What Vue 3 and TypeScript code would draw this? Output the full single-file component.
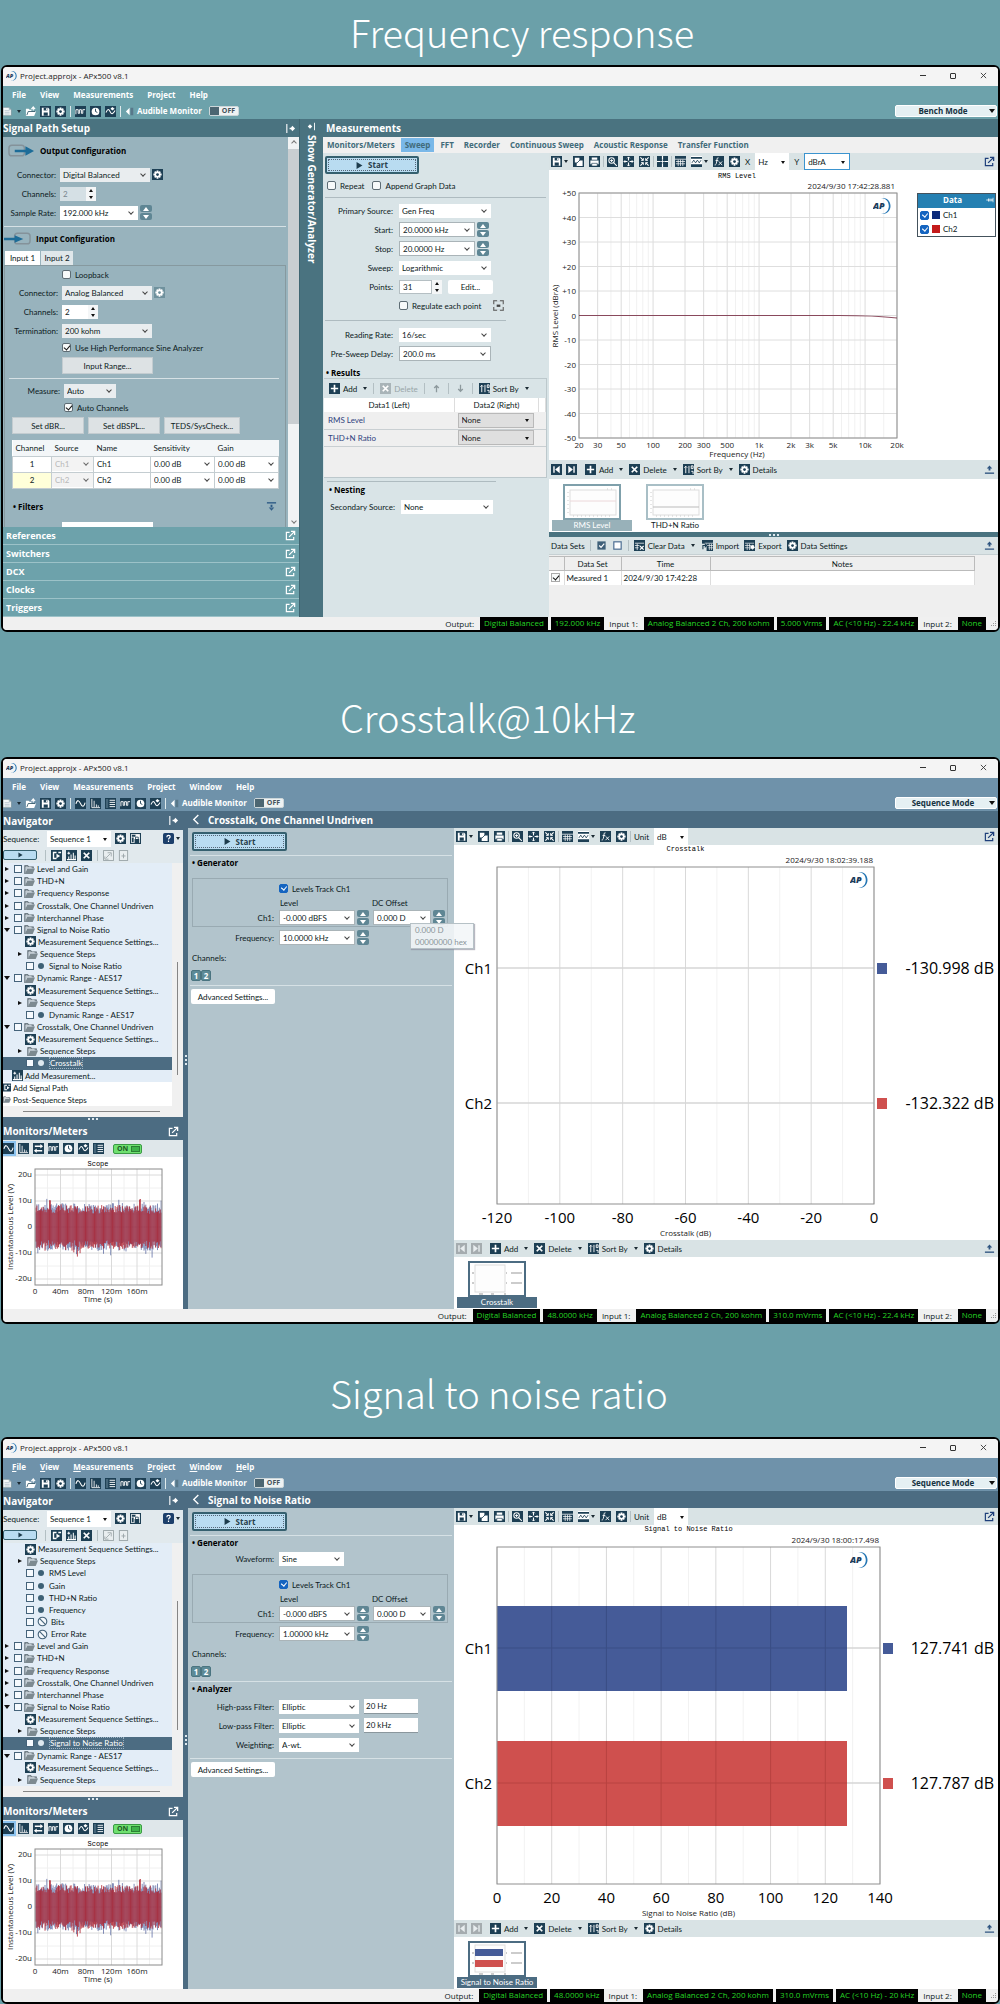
<script setup lang="ts">
import { h } from 'vue'

type Attrs = Record<string, unknown>

const DARK = '#1d3f54'
const sq = (body: string, fill = DARK) => `<rect width="12" height="12" fill="${fill}"/>${body}`
const gear =
  '<g fill="#fff"><path d="M5 1.5h2v9H5zM1.5 5h9v2h-9z"/><path d="M2.3 3.5 3.5 2.3l6.2 6.2-1.2 1.2zM8.5 2.3l1.2 1.2-6.2 6.2-1.2-1.2z"/><circle cx="6" cy="6" r="3.3"/></g>'
const line = (d: string, w = 1.2, c = '#fff') => `<path d="${d}" fill="none" stroke="${c}" stroke-width="${w}"/>`

const glyphs: Record<string, string> = {
  page: '<path d="M0 1h7l3 3v7H0z" fill="#f4f8f9" stroke="#6d8790" stroke-width=".8"/><path d="M7 1v3h3" fill="#9fb4bb"/><path d="M2 5h6M2 7h6M2 9h6" stroke="#9ab" stroke-width=".7"/>',
  open: '<path d="M1 11V3h3l1 1h2v2h5l-2 5z" fill="#fff"/><path d="M2 10l1.500-4H11" fill="none" stroke="#2d5364" stroke-width=".9"/><path d="M7 3.500 9 1l2 2.500M9 1v4" stroke="#fff" fill="none" stroke-width="1.200"/>',
  save: sq('<path d="M2 2h7l1.200 1.200V10.500H2z" fill="#fff"/><path d="M4 2h4v3H4zM4 7h4.500v3.500H4z" fill="#1d3f54"/><path d="M6.500 2.500h1v2h-1z" fill="#fff"/>'),
  gear: sq(gear + '<circle cx="6" cy="6" r="1.500" fill="#1d3f54"/>'),
  gearDim: sq(gear + '<circle cx="6" cy="6" r="1.500" fill="#6f919d"/>', '#6f919d'),
  bits: sq(line('M1 9V4h2.500v4H5V4h2v4h1.500V4H11', 1)),
  clock: sq('<circle cx="6" cy="6" r="4.200" fill="#fff"/>' + line('M6 3v3l2 1', 1, DARK)),
  sweep: sq(line('M1 7c2-4 3-4 4.500-1s2.500 4 5.500-1', 1.1) + '<path d="M8 1l2.500 2L8 5 6 3z" fill="#fff"/>'),
  sine: sq(line('M1 6.500C2.500 1 4.500 2.500 6 6s3.500 5 5-1', 1.1)),
  fft: sq(line('M2 1v9.500h9M4.500 10V3M7 10V7M9 10V8', 0.9)),
  list: sq('<path d="M1 1h2.500v10H1z" fill="#446579"/>' + line('M5 2.500h6M5 4.800h6M5 7.100h6M5 9.400h6', 1)),
  swap: sq(line('M2 3.500h7M3 8.500h7', 1.6) + '<path d="M8 1l3 2.500L8 6zM4 6v5L1 8.500z" fill="#fff"/>'),
  speaker: '<path d="M1 6l4-4v8z" fill="#fff"/><path d="M6 2h3v8H6z" fill="#58788a"/>',
  copy: sq('<path d="M2 2h5v5H2zM6 5h4.500v6H4V8" fill="#fff"/>' + line('M4 8l5-5', 0.9, DARK)),
  print: sq('<path d="M3 1.500h6V4H3zM1.500 5h9v4h-9z" fill="#fff"/><path d="M3 8h6v3H3z" fill="#fff" stroke="#1d3f54" stroke-width=".7"/>'),
  zoom: sq('<circle cx="5" cy="5" r="3" fill="none" stroke="#fff" stroke-width="1.100"/>' + line('M7.200 7.200l3.500 3.500M3.500 5h3M5 3.500v3', 1.1)),
  expand: sq(line('M6 1v10M1 6h10', 1.2) + line('M4.500 2.500 6 1l1.500 1.500M4.500 9.500 6 11l1.500-1.500M2.500 4.500 1 6l1.500 1.500M9.500 4.500 11 6 9.500 7.500', 0.9) + '<path d="M4.800 4.800h2.400v2.400H4.800z" fill="#1d3f54"/>'),
  fit: sq(line('M1.500 1.500l3.200 3.200M10.500 1.500 7.300 4.700M1.500 10.500l3.200-3.200M10.500 10.500 7.300 7.300', 1.2) + line('M4.800 2.200v2.600H2.200M7.200 2.200v2.600h2.600M4.800 9.800V7.200H2.200M7.200 9.800V7.200h2.600', 0.9)),
  cross: sq(line('M6 0v12M0 6h12', 1.3) + '<path d="M4 4h4v4H4z" fill="#1d3f54"/>' + line('M6 4.500v3M4.500 6h3', 1)),
  grid: sq(line('M0 3.500h12M1 6h10M1 8.500h10M3.500 4v7M6 4v7M8.500 4v7', 0.8)),
  axis: sq('<path d="M0 0h12v1H0zM0 3h12v6H0z" fill="#fff"/>' + line('M1 7.500l2-3 2 3 2-3 2 3 2-3', 0.9, DARK)),
  fx: sq(line('M6 2C4 1.500 4.500 4 4 6.500S3 10 1.800 9.800M2.800 5h3M6.500 6l3.500 4M10 6l-4 4', 1)),
  popout: line('M5 2.500H1.500v8h8V7.500', 1.3, 'currentColor') + line('M4.500 7.500 10 2M6.500 1.500h4v4', 1.4, 'currentColor'),
  first: sq('<path d="M2.500 2.500H4v7H2.500zM9.500 2v8L4.500 6z" fill="#fff"/>'),
  last: sq('<path d="M8 2.500h1.500v7H8zM2.500 2v8L7.500 6z" fill="#fff"/>'),
  firstDim: sq('<path d="M2.500 2.500H4v7H2.500zM9.500 2v8L4.500 6z" fill="#e8edef"/>', '#a5acaf'),
  lastDim: sq('<path d="M8 2.500h1.500v7H8zM2.500 2v8L7.500 6z" fill="#e8edef"/>', '#a5acaf'),
  plus: sq(line('M6 2v8M2 6h8', 1.8)),
  x: sq(line('M3 3l6 6M9 3l-6 6', 1.9)),
  xDim: sq(line('M3 3l6 6M9 3l-6 6', 1.9), '#a9b4b8'),
  sort: sq(line('M3 10V2.500M1.500 4 3 2.500 4.500 4M6.500 2v8M9 2h2v3H9zM9 8h2v3', 1)),
  up: line('M6 10V3M3.500 5.500 6 3l2.500 2.500', 1.4, '#8d999d'),
  down: line('M6 2v7M3.500 6.500 6 9l2.500-2.500', 1.4, '#8d999d'),
  upload: '<path d="M1 10h10" stroke="#2f5580" stroke-width="1.500"/><path d="M6 1.500 9 5H3zM5 4h2v3H5z" fill="#2f5580"/>',
  download: '<path d="M1 2h10" stroke="#2c5a85" stroke-width="1.500"/><path d="M6 10.500 9 7H3zM5 4h2v4H5z" fill="#2c5a85"/>',
  clear: sq(line('M1 3.500h10M1 6h5M1 8.500h4M3.500 4v7', 0.8) + line('M6.500 6.500l4 4M10.500 6.500l-4 4', 1.3)),
  import: sq(line('M3 3.500h9M5 6h7M7 8.500h5M8 4v7M10.300 4v7', 0.7) + '<path d="M0 4h5v8H0z" fill="#dbe4e6"/>' + line('M1 10V6h4M3 4l2 2-2 2', 1.2, DARK)),
  export: sq(line('M1 3.500h10M1 6h10M1 8.500h5M3.500 4v7M6 4v7', 0.7) + '<path d="M7 6.500h2V5l3 3-3 3V9.500H7z" fill="#fff"/>'),
  allOn: '<rect x="1.500" y="1.500" width="9" height="9" fill="#3f6079"/>' + line('M3.500 6l2 2 3.500-4', 1.3),
  allOff: '<rect x="2" y="2" width="8" height="8" fill="#fff" stroke="#4b6d92" stroke-width="1.300"/>',
  target: '<rect x=".8" y=".8" width="10.400" height="10.400" fill="none" stroke="#666" stroke-width="1.300"/><path d="M4.500 0h3v2h-3zM4.500 10h3v2h-3zM0 4.500h2v3H0zM10 4.500h2v3h-2z" fill="#d9e4e7"/><path d="M4 5h4v2.500H4z" fill="#444"/>',
  folder: '<path d="M1 11V2h3l1 1.200h5V5" fill="none" stroke="#4e5c64" stroke-width="1.200"/><path d="M1 11l2.500-6H12l-2.500 6z" fill="#7d8a91"/><path d="M2 3h6v1.500H3.500L2 8z" fill="#c3ccd2"/>',
  lockDoc: '<rect x=".6" y=".6" width="10.800" height="10.800" fill="#fff" stroke="#1d3f54" stroke-width="1.200"/><path d="M5 6.500h5V11H5zM2 2h4v2H2zM2 5h2v5H2z" fill="#1d3f54"/>' + line('M6 6.500V4.500h3v2', 0.9, DARK),
  help: '<rect width="12" height="12" rx="2" fill="#1c3f6b"/>' + line('M4.200 4.500C4.200 1.800 8 2 7.800 4.200 7.700 5.500 6 5.500 6 7M6 8.300v1.500', 1.3),
  stepIn: sq('<path d="M2 2h4v1.500H3.500v5H6V10H2zM6 4l4 2.500L6 9zM8 2h3v1.500H8z" fill="#fff"/>'),
  addMeas: sq(line('M1.500 3.500h3M3 2v3M1 10.500h10M3 10V7M5.500 10V5M8 10V3M10 10V6', 1.1)),
  dimA: '<rect x=".6" y=".6" width="10.800" height="10.800" fill="#e9eef0" stroke="#9aa4a8"/>' + line('M3 9l5-5M5 3h4v4M2 7v3h4', 0.9, '#9aa4a8'),
  dimB: '<rect x="1.500" y=".6" width="9" height="10.800" fill="#e9eef0" stroke="#9aa4a8"/>' + line('M6 4v5M3.800 6.500h4.400', 1, '#9aa4a8'),
  blocked: '<circle cx="6" cy="6" r="4.700" fill="#f4f8fc" stroke="#45637a" stroke-width="1.200"/>' + line('M2.700 2.700l6.600 6.600', 1.2, '#45637a'),
  pinOut: line('M2 1v10', 1.2) + '<path d="M5 6h2" stroke="#fff" stroke-width="1.500"/><path d="M8 3l3 3-3 3-2-3z" fill="#fff"/>',
  pinIn: line('M10 1v10', 1.2) + '<path d="M1 6l3-3 3 3-3 3z" fill="#fff"/>',
  back: line('M8 1 3 6l5 5', 1.5),
  play: '<path d="M1 0l10 6-10 6z" fill="#1c3b4c"/>',
}

const Ico = (p: Attrs) =>
  h('svg', { class: 'ico', viewBox: '0 0 12 12', 'aria-hidden': 'true', innerHTML: glyphs[p.n as string] })

const Sel = (p: Attrs) =>
  h('span', { class: 'sel' }, [
    h('select', { id: p.id, 'aria-label': p.id ? undefined : p.label, disabled: p.off }, [h('option', String(p.v))]),
  ])

const Spin = () =>
  h('span', { class: 'spin' }, [
    h('button', { type: 'button', 'aria-label': 'Increase' }, [h('i')]),
    h('button', { type: 'button', 'aria-label': 'Decrease' }, [h('i')]),
  ])

const ApLogo = () =>
  h('svg', {
    class: 'aplogo',
    viewBox: '0 0 18 16',
    'aria-label': 'AP',
    innerHTML:
      '<path d="M8 0c6-.5 9.500 3 9.500 8s-4 8.500-9.500 8c5-.5 7.800-3.500 7.800-8S13 .5 8 0z" fill="#2476b4"/><text x="0" y="11" font-size="9" font-weight="800" font-style="italic" font-family="Open Sans, sans-serif" fill="#1b3c5c">AP</text>',
  })

interface TreeRow { k: string; t: string; open?: boolean; sel?: boolean; white?: boolean }
const grp = (t: string, open = false): TreeRow => ({ k: 'grp', t, open })
const settings: TreeRow = { k: 'set', t: 'Measurement Sequence Settings...' }
const steps: TreeRow = { k: 'steps', t: 'Sequence Steps' }
const leaf = (t: string, sel = false): TreeRow => ({ k: 'leaf', t, sel })
const groups = ['Level and Gain', 'THD+N', 'Frequency Response', 'Crosstalk, One Channel Undriven', 'Interchannel Phase']

const treeA: TreeRow[] = [
  ...groups.map((g) => grp(g)),
  grp('Signal to Noise Ratio', true), settings, steps, leaf('Signal to Noise Ratio'),
  grp('Dynamic Range - AES17', true), settings, steps, leaf('Dynamic Range - AES17'),
  grp('Crosstalk, One Channel Undriven', true), settings, steps, leaf('Crosstalk', true),
  { k: 'addm', t: 'Add Measurement...' },
  { k: 'addp', t: 'Add Signal Path', white: true },
  { k: 'post', t: 'Post-Sequence Steps', white: true },
]
const treeB: TreeRow[] = [
  settings, steps, leaf('RMS Level'), leaf('Gain'), leaf('THD+N Ratio'), leaf('Frequency'),
  { k: 'no', t: 'Bits' }, { k: 'no', t: 'Error Rate' },
  ...groups.map((g) => grp(g)),
  grp('Signal to Noise Ratio', true), settings, steps, leaf('Signal to Noise Ratio', true),
  grp('Dynamic Range - AES17', true), settings, steps,
]

const benchStatus = ['Digital Balanced', '192.000 kHz', 'Analog Balanced 2 Ch, 200 kohm', '5.000 Vrms', 'AC (<10 Hz) - 22.4 kHz']

const windows = [
  {
    id: 'w1', heading: 'Frequency response', mode: 'Bench Mode', bench: true, keys: false,
    menu: ['File', 'View', 'Measurements', 'Project', 'Help'], tools: ['bits', 'clock', 'sweep'],
    status: benchStatus, title: '', chart: '', tree: [] as TreeRow[], freq: '', snr: false,
    max: 0, min: 0, step: 0, plotW: 0, values: [] as string[], date: '', axis: '',
  },
  {
    id: 'w2', heading: 'Crosstalk@10kHz', mode: 'Sequence Mode', bench: false, keys: false,
    menu: ['File', 'View', 'Measurements', 'Project', 'Window', 'Help'],
    tools: ['sine', 'fft', 'list', 'bits', 'clock', 'sweep'],
    status: ['Digital Balanced', '48.0000 kHz', 'Analog Balanced 2 Ch, 200 kohm', '310.0 mVrms', 'AC (<10 Hz) - 22.4 kHz'],
    title: 'Crosstalk, One Channel Undriven', chart: 'Crosstalk', tree: treeA, freq: '10.0000 kHz', snr: false,
    min: -120, max: 0, step: 20, plotW: 377, values: ['-130.998 dB', '-132.322 dB'],
    date: '2024/9/30 18:02:39.188', axis: 'Crosstalk (dB)',
  },
  {
    id: 'w3', heading: 'Signal to noise ratio', mode: 'Sequence Mode', bench: false, keys: true,
    menu: ['File', 'View', 'Measurements', 'Project', 'Window', 'Help'],
    tools: ['sine', 'fft', 'list', 'bits', 'clock', 'sweep'],
    status: ['Digital Balanced', '48.0000 kHz', 'Analog Balanced 2 Ch, 200 kohm', '310.0 mVrms', 'AC (<10 Hz) - 20 kHz'],
    title: 'Signal to Noise Ratio', chart: 'Signal to Noise Ratio', tree: treeB, freq: '1.00000 kHz', snr: true,
    min: 0, max: 140, step: 20, plotW: 383, values: ['127.741 dB', '127.787 dB'],
    date: '2024/9/30 18:00:17.498', axis: 'Signal to Noise Ratio (dB)',
  },
]
type Win = (typeof windows)[number]

const ticks = (w: Win) => {
  const n = (w.max - w.min) / w.step
  return Array.from({ length: n + 1 }, (_, i) => ({ v: w.min + i * w.step, x: 43 + (w.plotW * i) / n }))
}
const minors = (w: Win) => {
  const n = (w.max - w.min) / w.step
  return Array.from({ length: n }, (_, i) => 43 + (w.plotW * (i + 0.5)) / n)
}

const graphTools = (bench: boolean) =>
  bench
    ? [['save', 'c'], ['copy'], ['print'], ['|'], ['zoom'], ['expand'], ['fit'], ['|'], ['cross'], ['|'], ['grid'], ['axis', 'c'], ['fx'], ['gear']]
    : [['save', 'c'], ['copy'], ['print'], ['|'], ['zoom'], ['expand'], ['fit'], ['|'], ['grid'], ['axis', 'c'], ['fx'], ['gear']]

// Logarithmic frequency axis, 20 Hz to 20 kHz
const fx = (f: number) => 30 + (318 * Math.log10(f / 20)) / 3
const freqMajor = [[20, '20'], [30, '30'], [50, '50'], [100, '100'], [200, '200'], [300, '300'], [500, '500'], [1000, '1k'], [2000, '2k'], [3000, '3k'], [5000, '5k'], [10000, '10k'], [20000, '20k']] as [number, string][]
const freqMinor = [40, 60, 70, 80, 90, 400, 600, 700, 800, 900, 4000, 6000, 7000, 8000, 9000, 15000]
const levels = Array.from({ length: 11 }, (_, i) => ({ t: (50 - i * 10 > 0 ? '+' : '') + (50 - i * 10), y: 23 + i * 24.5 }))

// Noise trace for the scope
const noise = (seed: number, amp: number) => {
  let s = seed
  const rnd = () => ((s = (s * 16807) % 2147483647) / 2147483647)
  let d = ''
  for (let x = 33; x <= 159; x += 0.9) {
    const up = amp * (0.6 + 0.4 * rnd()) + (rnd() > 0.88 ? rnd() * 8 : 0)
    const dn = amp * (0.6 + 0.4 * rnd()) + (rnd() > 0.88 ? rnd() * 8 : 0)
    d += `M${x.toFixed(1)} ${(70 - up).toFixed(1)}V${(70 + dn).toFixed(1)}`
  }
  return d
}
const blueNoise = noise(4711, 24)
const redNoise = noise(90210, 22)

const accordion = ['References', 'Switchers', 'DCX', 'Clocks', 'Triggers']
const benchTabs = ['Monitors/Meters', 'Sweep', 'FFT', 'Recorder', 'Continuous Sweep', 'Acoustic Response', 'Transfer Function']
</script>

<template>
  <main class="page">
    <template v-for="w in windows" :key="w.id">
      <h1 class="heading" :class="'h-' + w.id">{{ w.heading }}</h1>
      <section class="win" :class="w.bench ? 'bench' : 'seq'">
        <header class="titlebar">
          <ApLogo class="small" />
          <span>Project.approjx - APx500 v8.1</span>
          <div class="caption">
            <button type="button" aria-label="Minimize"><i class="min"></i></button>
            <button type="button" aria-label="Maximize"><i class="max"></i></button>
            <button type="button" aria-label="Close">
              <svg viewBox="0 0 8 8" class="close"><path d="M1 1l6 6M7 1L1 7" stroke="#333" fill="none" /></svg>
            </button>
          </div>
        </header>
        <div class="menuarea">
          <nav class="menu">
            <a v-for="m in w.menu" :key="m" href="#"><template v-if="w.keys"><u>{{ m[0] }}</u>{{ m.slice(1) }}</template><template v-else>{{ m }}</template></a>
          </nav>
          <div class="apptools">
            <Ico n="page" class="clip" /><b class="caret"></b>
            <Ico n="open" /><Ico n="save" /><Ico n="gear" /><i class="vsep"></i>
            <Ico v-for="t in w.tools" :key="t" :n="t" /><i class="vsep"></i>
            <span class="audible"><Ico n="speaker" />Audible Monitor</span>
            <button type="button" class="off"><i></i>OFF</button>
            <span class="sel mode"><select aria-label="Mode"><option>{{ w.mode }}</option></select></span>
          </div>
        </div>

        <div v-if="w.bench" class="body">
          <aside class="setup">
            <h2 class="bar">Signal Path Setup<Ico n="pinOut" class="end" /></h2>
            <div class="scrollwrap">
              <div class="setupform">
                <h3 class="cfg">
                  <svg viewBox="0 0 28 14"><rect x="1" y="1" width="16" height="11" rx="3" fill="none" stroke="#84929a" stroke-width="1.500" /><path d="M7 7h13" stroke="#1c6c98" stroke-width="2.500" /><path d="M18 2l9 5-9 5z" fill="#1c6c98" /></svg>
                  Output Configuration
                </h3>
                <div class="row"><label for="oc">Connector:</label><Sel id="oc" v="Digital Balanced" class="w90 grey" /><Ico n="gear" /></div>
                <div class="row"><label for="och">Channels:</label><input id="och" class="num" value="2" disabled /><Spin class="lite" /></div>
                <div class="row"><label for="osr">Sample Rate:</label><Sel id="osr" v="192.000 kHz" class="w78" /><Spin /></div>
                <hr />
                <h3 class="cfg in">
                  <svg viewBox="0 0 28 14"><rect x="11" y="1" width="16" height="11" rx="3" fill="none" stroke="#84929a" stroke-width="1.500" /><path d="M0 7h13" stroke="#1c6c98" stroke-width="2.500" /><path d="M11 3l9 4-9 4z" fill="#1c6c98" /></svg>
                  Input Configuration
                </h3>
                <div class="intabs"><button type="button" class="on">Input 1</button><button type="button">Input 2</button></div>
                <div class="inbox">
                  <label class="chk l17"><input type="checkbox" /> Loopback</label>
                  <div class="row"><label for="ic">Connector:</label><Sel id="ic" v="Analog Balanced" class="w90 grey" /><Ico n="gearDim" /></div>
                  <div class="row"><label for="ich">Channels:</label><input id="ich" class="num" value="2" /><Spin class="lite" /></div>
                  <div class="row"><label for="it">Termination:</label><Sel id="it" v="200 kohm" class="w90 grey" /></div>
                  <label class="chk"><input type="checkbox" class="plain" checked /> Use High Performance Sine Analyzer</label>
                  <button type="button" class="btn range">Input Range...</button>
                  <hr class="inner" />
                  <div class="row m"><label for="im">Measure:</label><Sel id="im" v="Auto" class="w52 grey" /></div>
                  <label class="chk m"><input type="checkbox" class="plain" checked /> Auto Channels</label>
                  <div class="btns"><button type="button" class="btn">Set dBR...</button><button type="button" class="btn">Set dBSPL...</button><button type="button" class="btn">TEDS/SysCheck...</button></div>
                  <table class="chan">
                    <thead><tr><th>Channel</th><th>Source</th><th>Name</th><th>Sensitivity</th><th>Gain</th></tr></thead>
                    <tbody>
                      <tr v-for="n in [1, 2]" :key="n">
                        <td class="c" :class="{ y: n === 2 }">{{ n }}</td>
                        <td class="dim"><Sel label="Source" :v="'Ch' + n" off /></td>
                        <td><input :aria-label="'Name ' + n" :value="'Ch' + n" /></td>
                        <td><Sel label="Sensitivity" v="0.00 dB" /></td>
                        <td><Sel label="Gain" v="0.00 dB" /></td>
                      </tr>
                    </tbody>
                  </table>
                  <h4 class="filters">• Filters<Ico n="download" class="end" /></h4>
                  <div class="cut"></div>
                </div>
              </div>
              <div class="sb"><b class="up"></b><i></i><b class="dn"></b></div>
            </div>
            <button v-for="a in accordion" :key="a" type="button" class="acc">{{ a }}<Ico n="popout" class="end" /></button>
          </aside>
          <div class="strip"><Ico n="pinIn" /><span>Show Generator/Analyzer</span></div>
          <div class="meas">
            <h2 class="bar">Measurements</h2>
            <nav class="tabs"><a v-for="t in benchTabs" :key="t" href="#" :class="{ on: t === 'Sweep' }">{{ t }}</a></nav>
            <div class="cols">
              <div class="sweepcfg">
                <button type="button" class="start"><Ico n="play" />Start</button>
                <div class="pair"><label><input type="checkbox" /> Repeat</label><label><input type="checkbox" /> Append Graph Data</label></div>
                <hr class="r12" />
                <div class="row"><label for="ps">Primary Source:</label><Sel id="ps" v="Gen Freq" class="w92" /></div>
                <div class="row"><label for="st">Start:</label><Sel id="st" v="20.0000 kHz" class="w76 sunk" /><Spin /></div>
                <div class="row"><label for="sp">Stop:</label><Sel id="sp" v="20.0000 Hz" class="w76 sunk" /><Spin /></div>
                <div class="row"><label for="sw">Sweep:</label><Sel id="sw" v="Logarithmic" class="w92" /></div>
                <div class="row"><label for="pt">Points:</label><input id="pt" class="num wide" value="31" /><Spin class="lite" /><button type="button" class="edit">Edit...</button></div>
                <div class="row"><label class="reg"><input type="checkbox" /> Regulate each point</label><Ico n="target" class="tgt" /></div>
                <hr class="r44" />
                <div class="row"><label for="rr">Reading Rate:</label><Sel id="rr" v="16/sec" class="w92" /></div>
                <div class="row"><label for="pd">Pre-Sweep Delay:</label><Sel id="pd" v="200.0 ms" class="w92 sunk" /></div>
                <h4 class="sect res">• Results</h4>
                <div class="results">
                  <div class="rt">
                    <button type="button"><Ico n="plus" />Add<b class="caret"></b></button><i class="vsep g"></i>
                    <button type="button" class="dis" disabled><Ico n="xDim" />Delete</button><i class="vsep g"></i>
                    <button type="button" aria-label="Move up"><Ico n="up" /></button><i class="vsep g"></i>
                    <button type="button" aria-label="Move down"><Ico n="down" /></button><i class="vsep g"></i>
                    <button type="button"><Ico n="sort" />Sort By<b class="caret"></b></button>
                  </div>
                  <table>
                    <thead><tr><th>Data1 (Left)</th><th>Data2 (Right)</th><th class="e"></th></tr></thead>
                    <tbody>
                      <tr v-for="r in ['RMS Level', 'THD+N Ratio']" :key="r"><td>{{ r }}</td><td><Sel :label="r" v="None" class="solid" /></td><td></td></tr>
                    </tbody>
                  </table>
                </div>
                <hr class="r52" />
                <h4 class="sect n">• Nesting</h4>
                <div class="row n"><label for="ss">Secondary Source:</label><Sel id="ss" v="None" class="w92" /></div>
              </div>
              <div class="graphcol">
                <div class="gtools">
                  <template v-for="(t, i) in graphTools(true)" :key="i"><i v-if="t[0] === '|'" class="vsep g"></i><template v-else><Ico :n="t[0]" /><b v-if="t[1]" class="caret"></b></template></template>
                  <label for="ux">X</label><Sel id="ux" v="Hz" class="solid unit" />
                  <label for="uy">Y</label><Sel id="uy" v="dBrA" class="solid unit act" />
                  <Ico n="popout" class="end blue" />
                </div>
                <div class="chartwrap">
                  <svg viewBox="0 0 449 290" class="chart">
                    <text x="188" y="8" class="mono mid">RMS Level</text>
                    <text x="346" y="19" class="endt">2024/9/30 17:42:28.881</text>
                    <path v-for="f in freqMinor" :key="f" :d="`M${fx(f)} 23V268`" stroke="#f1f1f1" />
                    <path v-for="f in freqMajor" :key="f[0]" :d="`M${fx(f[0])} 23V268`" stroke="#dcdcdc" />
                    <path v-for="l in levels" :key="l.t" :d="`M30 ${l.y}H348`" stroke="#dedede" />
                    <rect x="30" y="23" width="318" height="245" fill="none" stroke="#8f8f8f" />
                    <path d="M30 145.500H290C320 145.500 335 146.500 348 148" fill="none" stroke="#7a2f45" stroke-width="1.200" opacity=".85" />
                    <text v-for="l in levels" :key="l.t" x="27" :y="l.y + 3" class="endt">{{ l.t }}</text>
                    <text v-for="f in freqMajor" :key="f[1]" :x="fx(f[0])" y="278" class="mid">{{ f[1] }}</text>
                    <text x="188" y="287" class="mid">Frequency (Hz)</text>
                    <text transform="translate(9 146) rotate(-90)" class="mid">RMS Level (dBrA)</text>
                  </svg>
                  <ApLogo class="inchart" />
                  <div class="legend">
                    <div class="lh">Data<svg viewBox="0 0 10 8"><path d="M0 4h3M3 2v4M3 3h5v2H3M9 1v6" stroke="#fff" fill="none" /></svg></div>
                    <label><input type="checkbox" class="blue" checked /><i class="navy"></i>Ch1</label>
                    <label><input type="checkbox" class="blue" checked /><i class="red"></i>Ch2</label>
                  </div>
                </div>
                <div class="gtools low">
                  <Ico n="first" /><Ico n="last" class="gap" />
                  <button type="button"><Ico n="plus" />Add<b class="caret"></b></button>
                  <button type="button"><Ico n="x" />Delete<b class="caret"></b></button>
                  <button type="button"><Ico n="sort" />Sort By<b class="caret"></b></button>
                  <button type="button"><Ico n="gear" />Details</button>
                  <Ico n="upload" class="end" />
                </div>
                <div class="thumbs">
                  <figure class="on">
                    <svg viewBox="0 0 54 32"><rect x="5" y="4" width="46" height="25" fill="#fdfdfd" stroke="#ddd" /><path d="M5 15h46" stroke="#ecd8da" /><path d="M3 6v22M8 30h40M42 3h8" stroke="#ccc" stroke-dasharray="1 3" /></svg>
                    <figcaption>RMS Level</figcaption>
                  </figure>
                  <figure>
                    <svg viewBox="0 0 54 32"><rect x="5" y="4" width="46" height="25" fill="#fdfdfd" stroke="#ddd" /><path d="M5 21h46" stroke="#bbb" /><path d="M3 6v22M8 30h40M42 3h8" stroke="#ccc" stroke-dasharray="1 3" /></svg>
                    <figcaption>THD+N Ratio</figcaption>
                  </figure>
                </div>
                <div class="split"><i class="dots"></i></div>
                <div class="gtools sets">
                  <span>Data Sets</span><i class="vsep g"></i><Ico n="allOn" /><Ico n="allOff" /><i class="vsep g"></i>
                  <button type="button"><Ico n="clear" />Clear Data<b class="caret"></b></button>
                  <button type="button"><Ico n="import" />Import</button>
                  <button type="button"><Ico n="export" />Export</button>
                  <button type="button"><Ico n="gear" />Data Settings</button>
                  <Ico n="upload" class="end" />
                </div>
                <div class="setsarea">
                  <table>
                    <thead><tr><th class="a"></th><th class="b">Data Set</th><th class="t">Time</th><th>Notes</th></tr></thead>
                    <tbody><tr><td><input type="checkbox" class="plain dimc" checked aria-label="Use Measured 1" /></td><td>Measured 1</td><td>2024/9/30 17:42:28</td><td></td></tr></tbody>
                  </table>
                </div>
              </div>
            </div>
          </div>
        </div>

        <div v-else class="body">
          <aside class="nav">
            <h2 class="bar nb">Navigator<Ico n="pinOut" class="end" /></h2>
            <div class="navtools">
              <div>
                <label :for="w.id + 'q'">Sequence:</label><Sel :id="w.id + 'q'" v="Sequence 1" class="solid seqsel" />
                <Ico n="gear" /><Ico n="lockDoc" /><Ico n="help" class="end" /><b class="caret"></b>
              </div>
              <div class="second">
                <button type="button" class="run" aria-label="Run sequence"><Ico n="play" /></button><i class="vsep g"></i>
                <Ico n="stepIn" /><Ico n="addMeas" /><Ico n="x" /><i class="vsep g"></i><Ico n="dimA" /><Ico n="dimB" />
              </div>
            </div>
            <div class="treewrap">
              <ul class="tree">
                <li v-for="(r, i) in w.tree" :key="i" :class="[r.k, { picked: r.sel, white: r.white }]">
                  <b v-if="r.k === 'grp' || r.k === 'steps'" class="tri" :class="{ open: r.open }"></b>
                  <input v-if="r.k === 'grp' || r.k === 'leaf' || r.k === 'no'" type="checkbox" :aria-label="r.t" />
                  <i v-if="r.k === 'leaf'" class="dot"></i>
                  <Ico v-if="r.k === 'no'" n="blocked" />
                  <Ico v-if="r.k === 'grp' || r.k === 'steps' || r.k === 'post'" n="folder" />
                  <Ico v-if="r.k === 'set'" n="gear" />
                  <Ico v-if="r.k === 'addm'" n="addMeas" />
                  <Ico v-if="r.k === 'addp'" n="stepIn" />
                  <span>{{ r.t }}</span>
                </li>
              </ul>
              <div class="vs"><i :class="{ hi: w.snr }"></i></div>
            </div>
            <div class="hs"><i></i></div>
            <div class="bar mm"><i class="dots"></i><h2>Monitors/Meters</h2><Ico n="popout" class="end" /></div>
            <div class="mtools"><Ico n="sine" class="act" /><Ico n="fft" /><Ico n="swap" /><Ico n="bits" /><Ico n="clock" /><Ico n="sweep" /><Ico n="list" /><button type="button" class="on">ON<i></i></button></div>
            <div class="scope">
              <svg viewBox="0 0 178 150">
                <text x="95" y="9" class="mono mid">Scope</text>
                <path d="M44.500 12v116M70 12v116M95.500 12v116M121 12v116M146.500 12v116M32 31h127M32 57h127M32 83h127M32 109h127" stroke="#f0f0f0" />
                <path d="M57.500 12v116M83 12v116M108.500 12v116M134 12v116M32 18h127M32 44h127M32 70h127M32 96h127M32 122h127" stroke="#dadada" />
                <path :d="blueNoise" stroke="#3d4f92" stroke-width=".8" opacity=".8" />
                <path :d="redNoise" stroke="#b0222f" stroke-width=".9" opacity=".9" />
                <rect x="32" y="12" width="127" height="116" fill="none" stroke="#8a8a8a" />
                <text v-for="(t, i) in ['20u', '10u', '0', '-10u', '-20u']" :key="t" x="29" :y="20 + i * 26" class="endt">{{ t }}</text>
                <text v-for="(t, i) in ['0', '40m', '80m', '120m', '160m']" :key="t" :x="32 + i * 25.5" y="137" class="mid">{{ t }}</text>
                <text x="95" y="145" class="mid">Time (s)</text>
                <text transform="translate(10 70) rotate(-90)" class="mid">Instantaneous Level (V)</text>
              </svg>
            </div>
          </aside>
          <div class="gutter"><i class="dots v"></i></div>
          <div class="meas">
            <h2 class="bar mt"><Ico n="back" />{{ w.title }}</h2>
            <div class="cols">
              <div class="stepcfg">
                <button type="button" class="start"><Ico n="play" />Start</button>
                <hr />
                <h4 class="sect">• Generator</h4>
                <div v-if="w.snr" class="row wf"><label for="wf">Waveform:</label><Sel id="wf" v="Sine" class="w65" /></div>
                <div class="group">
                  <label class="trk"><input type="checkbox" class="blue" checked /> Levels Track Ch1</label>
                  <div class="lv"><span>Level</span><span>DC Offset</span></div>
                  <div class="row"><label :for="w.id + 'lv'">Ch1:</label><Sel :id="w.id + 'lv'" v="-0.000 dBFS" class="w76 sunk" /><Spin /><Sel label="DC Offset" v="0.000 D" class="w58 sunk" /><Spin /></div>
                </div>
                <div v-if="!w.snr" class="tip" role="tooltip">0.000 D<br />00000000 hex</div>
                <div class="row fr"><label :for="w.id + 'fr'">Frequency:</label><Sel :id="w.id + 'fr'" :v="w.freq" class="w76 sunk" /><Spin /></div>
                <p class="chl">Channels:</p>
                <div class="badges"><button type="button">1</button><button type="button">2</button></div>
                <hr />
                <template v-if="w.snr">
                  <h4 class="sect an">• Analyzer</h4>
                  <div class="row"><label for="hp">High-pass Filter:</label><Sel id="hp" v="Elliptic" class="w80" /><input aria-label="High-pass frequency" class="txt" value="20 Hz" /></div>
                  <div class="row"><label for="lp">Low-pass Filter:</label><Sel id="lp" v="Elliptic" class="w80" /><input aria-label="Low-pass frequency" class="txt" value="20 kHz" /></div>
                  <div class="row"><label for="wt">Weighting:</label><Sel id="wt" v="A-wt." class="w80" /></div>
                  <hr class="last" />
                </template>
                <button type="button" class="adv">Advanced Settings...</button>
              </div>
              <div class="graphcol">
                <div class="gtools">
                  <template v-for="(t, i) in graphTools(false)" :key="i"><i v-if="t[0] === '|'" class="vsep g"></i><template v-else><Ico :n="t[0]" /><b v-if="t[1]" class="caret"></b></template></template>
                  <i class="vsep g"></i><label :for="w.id + 'u'">Unit</label><Sel :id="w.id + 'u'" v="dB" class="solid unit" />
                  <Ico n="popout" class="end blue" />
                </div>
                <div class="chartwrap">
                  <svg viewBox="0 -2 544 395" class="chart">
                    <text :x="43 + w.plotW / 2" y="4" class="mono mid">{{ w.chart }}</text>
                    <text :x="42 + w.plotW" y="16" class="endt">{{ w.date }}</text>
                    <path v-for="x in minors(w)" :key="x" :d="`M${x} 20V357`" stroke="#f2f2f2" />
                    <path v-for="t in ticks(w)" :key="t.v" :d="`M${t.x} 20V357`" stroke="#d9d9d9" />
                    <path :d="`M43 121h${w.plotW}M43 256h${w.plotW}`" stroke="#d6d6d6" stroke-width="1.500" />
                    <template v-if="w.snr">
                      <rect x="43" y="79" width="350" height="85" fill="#455b98" /><rect x="43" y="214" width="350" height="85" fill="#cf504e" />
                      <path d="M97.700 79v85M152.400 79v85M207.100 79v85M261.900 79v85M316.600 79v85M371.300 79v85M43 121h350" stroke="#3a4e85" />
                      <path d="M97.700 214v85M152.400 214v85M207.100 214v85M261.900 214v85M316.600 214v85M371.300 214v85M43 256h350" stroke="#b84340" />
                    </template>
                    <rect x="43" y="20" :width="w.plotW" height="337" fill="none" stroke="#8f8f8f" />
                    <text v-for="t in ticks(w)" :key="t.v" :x="t.x" y="376" class="big mid">{{ t.v }}</text>
                    <text x="38" y="127" class="big endt">Ch1</text><text x="38" y="262" class="big endt">Ch2</text>
                    <rect :x="46 + w.plotW" y="116" width="10" height="11" fill="#455b98" /><rect :x="46 + w.plotW" y="251" width="10" height="11" fill="#cf504e" />
                    <text x="540" y="127" class="value endt">{{ w.values[0] }}</text><text x="540" y="262" class="value endt">{{ w.values[1] }}</text>
                    <text :x="43 + w.plotW / 2" y="389" class="mid">{{ w.axis }}</text>
                  </svg>
                  <ApLogo class="inchart" />
                </div>
                <div class="gtools low">
                  <Ico n="firstDim" /><Ico n="lastDim" class="gap" />
                  <button type="button"><Ico n="plus" />Add<b class="caret"></b></button>
                  <button type="button"><Ico n="x" />Delete<b class="caret"></b></button>
                  <button type="button"><Ico n="sort" />Sort By<b class="caret"></b></button>
                  <button type="button"><Ico n="gear" />Details</button>
                  <Ico n="upload" class="end" />
                </div>
                <div class="thumbs">
                  <figure class="on">
                    <svg viewBox="0 0 54 32"><rect x="5" y="2" width="30" height="27" fill="#fdfdfd" stroke="#ddd" />
                      <template v-if="w.snr"><rect x="5" y="6" width="28" height="7" fill="#455b98" /><rect x="5" y="17" width="28" height="7" fill="#cf504e" /></template>
                      <path d="M2 10h2M2 20h2M36 10h1M36 20h1M41 10h11M41 20h11M9 31h4M21 31h3M34 31h2" stroke="#999" /></svg>
                    <figcaption>{{ w.chart }}</figcaption>
                  </figure>
                </div>
              </div>
            </div>
          </div>
        </div>

        <footer class="status">
          <span>Output:</span><b>{{ w.status[0] }}</b><b>{{ w.status[1] }}</b>
          <span>Input 1:</span><b>{{ w.status[2] }}</b><b>{{ w.status[3] }}</b><b>{{ w.status[4] }}</b>
          <span>Input 2:</span><b>None</b>
          <svg viewBox="0 0 8 8"><path d="M6 1h1v1H6zM4 3h1v1H4zM6 3h1v1H6zM2 5h1v1H2zM4 5h1v1H4zM6 5h1v1H6z" fill="#999" /></svg>
        </footer>
      </section>
    </template>
  </main>
</template>

<style>
body { background: #6ba0a9; }
</style>

<style scoped>
.page, .page :deep(*) { box-sizing: border-box; }
.page { font: 8px/12px Lato, "Open Sans", sans-serif; color: #0c1a22; }
.page :deep(button), .page :deep(input), .page :deep(select) { font: inherit; color: inherit; margin: 0; padding: 0; border: 0; border-radius: 0; background: none; appearance: none; outline: 0; }
a { color: inherit; text-decoration: none; }
h1, h2, h3, h4, p, ul, figure { margin: 0; padding: 0; font-size: inherit; list-style: none; }
hr { border: 0; border-top: 1px solid #d6e1e5; margin: 0; height: 1px; flex: none; }
h2, h3, h4, .menu, .audible, .tabs, .status, .lh, .strip, .sel.mode, .titlebar { font-family: "Open Sans", "Noto Sans", sans-serif; }
.page :deep(.start), .page :deep(.acc), .page :deep(.off), .page :deep(.mtools .on), .page :deep(.badges button) { font-family: "Open Sans", "Noto Sans", sans-serif; }
.ico { width: 11px; height: 11px; flex: none; display: block; }
.end { margin-left: auto !important; }
.caret { border: 2px solid transparent; border-top: 3px solid #1b2a33; border-bottom: 0; width: 0; height: 0; flex: none; }
.vsep { width: 1px; height: 11px; background: #dfeaec; flex: none; }
.vsep.g { background: #b3bfc3; }
.dots { display: block; width: 10px; height: 2px; border-top: 2px dotted #dfe9ef; }
.dots.v { width: 2px; height: 10px; border-top: 0; border-left: 2px dotted #dfe9ef; }

.heading { font: 300 38px/52px "Noto Sans CJK SC", "Noto Sans", sans-serif; color: #fff; display: flow-root; }
.h-w1 { height: 65px; padding: 6px 0 0 35%; }
.h-w2 { height: 125px; padding: 59px 0 0 34%; }
.h-w3 { height: 113px; padding: 43px 0 0 33%; }

.win { margin-left: 1px; border: 2px solid #000; border-radius: 6px; overflow: hidden; background: #f0f0f0; }
.titlebar { height: 19px; display: flex; align-items: center; background: #f4f4f4; padding: 0 0 2px 3px; color: #222; }
.aplogo { width: 18px; height: 16px; flex: none; }
.aplogo.small { width: 11px; height: 10px; margin-right: 3px; }
.caption { margin-left: auto; display: flex; align-items: center; }
.caption button { width: 30px; height: 17px; display: grid; place-items: center; }
.min { width: 6px; height: 1px; background: #333; }
.max { width: 6px; height: 6px; border: 1px solid #333; border-radius: 1px; }
.close { width: 7px; height: 7px; }
.menuarea { height: 33px; background: #6da2ab; display: flex; flex-direction: column; }
.seq .menuarea { background: #6f92aa; }
.menu { display: flex; gap: 14px; padding: 3px 9px 0; font-weight: 700; color: #fff; height: 17px; }
.apptools { display: flex; align-items: center; gap: 4px; height: 16px; padding: 0 1px 0 0; }
.apptools .clip { width: 10px; }
.apptools .caret { margin: 0; }
.audible { display: flex; align-items: center; gap: 1px; color: #fff; font-weight: 700; }
.page :deep(button.off) { display: flex; align-items: center; gap: 3px; width: 30px; height: 10px; border-radius: 2px; background: #eef2f3; border: 1px solid #ccd6d9; font-size: 7px; font-weight: 700; line-height: 8px; color: #44525a; margin-left: 3px; }
.off i { width: 9px; height: 8px; background: #4c6672; }

.sel { position: relative; display: block; flex: none; height: 14px; background: #fff; }
.sel :deep(select) { width: 100%; height: 100%; padding: 0 10px 0 3px; display: block; line-height: 12px; }
.sel::after { content: ""; position: absolute; right: 5px; top: 50%; width: 3px; height: 3px; margin-top: -3px; border: solid #444; border-width: 0 1px 1px 0; transform: rotate(45deg); pointer-events: none; }
.sel.grey { background: #e9edef; }
.sel.sunk { border: 1px solid #aab4b8; height: 15px; }
.sel.solid::after, .sel.mode::after { width: 0; height: 0; transform: none; border: 2px solid transparent; border-top: 3px solid #111; border-bottom: 0; margin-top: -1px; right: 4px; }
.sel.mode { margin-left: auto; width: 102px; height: 12px; background: #e5f0f3; border: 1px solid #fff; border-radius: 2px; font-weight: 700; color: #16323f; }
.sel.mode select { width: 100%; height: 100%; display: block; text-align: center; text-align-last: center; line-height: 10px; padding: 0 6px 0 0; }
.sel.mode::after { border-width: 4px 3px 0; right: 1px; margin-top: -2px; }
.w90 { width: 90px; } .w78 { width: 78px; } .w52 { width: 52px; } .w92 { width: 92px; } .w76 { width: 76px; } .w65 { width: 65px; } .w80 { width: 80px; } .w58 { width: 58px; }

.spin { display: flex; flex-direction: column; gap: 1px; width: 12px; height: 15px; flex: none; }
.spin :deep(button) { flex: 1; background: #5f8694; border-radius: 2px; display: grid; place-items: center; }
.spin :deep(i) { border: 3px solid transparent; border-bottom: 4px solid #fff; border-top: 0; }
.spin :deep(button + button i) { transform: rotate(180deg); }
.spin.lite { width: 10px; height: 14px; background: #f4f6f7; gap: 0; }
.spin.lite :deep(button) { background: none; }
.spin.lite :deep(i) { border-width: 2px; border-bottom: 3px solid #111; border-top: 0; }

.row { display: flex; align-items: center; height: 19px; gap: 2px; flex: none; }
.row > label { text-align: right; margin-right: 2px; flex: none; white-space: nowrap; }
.page :deep(.num) { width: 26px; height: 14px; background: #fff; padding: 0 3px; margin-right: -2px; }
.page :deep(.num:disabled) { background: #d5e0e5; color: #78868d; }
.page :deep(input[type="checkbox"]) { width: 9px; height: 9px; flex: none; background: #f7fafa; border: 1px solid #5d6c74; border-radius: 2px; position: relative; display: block; }
.page :deep(input.plain:checked::after), .page :deep(input.blue:checked::after) { content: ""; position: absolute; left: 2px; top: 0; width: 3px; height: 5px; border: solid #111; border-width: 0 1px 1px 0; transform: rotate(40deg); }
.page :deep(input[type="checkbox"].blue) { background: #1464c0; border-color: #1464c0; }
.page :deep(input.blue:checked::after) { border-color: #fff; height: 4px; }
.page :deep(input[type="checkbox"].dimc) { border-radius: 0; border-color: #aaa; }

.body { display: flex; align-items: stretch; background: #4a7380; }
.seq .body { background: #4c6c82; }
.bar { background: #4a7380; color: #fff; font-size: 10px; line-height: 14px; font-weight: 700; height: 18px; display: flex; align-items: center; flex: none; white-space: nowrap; }
.seq .bar { background: #4c6c82; }

.setup { width: 296px; flex: none; display: flex; flex-direction: column; }
.setup .bar { padding-right: 3px; }
.scrollwrap { flex: 1 1 0; min-height: 0; overflow: hidden; display: flex; background: #98b3bd; }
.setupform { flex: 1; min-width: 0; padding: 0 2px 0 1px; }
.cfg { display: flex; align-items: center; gap: 5px; height: 28px; padding-left: 4px; color: #000; }
.cfg svg { width: 27px; height: 14px; }
.cfg.in { height: 23px; padding-left: 0; }
.setupform .row > label { width: 52px; }
.setupform > hr { margin-top: 4px; }
.intabs { display: flex; gap: 1px; padding: 1px 0 0 1px; height: 15px; }
.page :deep(.intabs button) { background: #dfe7ea; padding: 0 3px; width: 32px; }
.page :deep(.intabs .on) { background: #fff; width: 35px; }
.inbox { border: 1px solid #86999f; height: 300px; }
.inbox .row > label { width: 53px; }
.inbox .row.m > label { width: 55px; }
.chk { display: flex; align-items: center; gap: 4px; height: 15px; padding-left: 57px; }
.chk.l17 { height: 17px; }
.chk.m { padding-left: 59px; }
.page :deep(.btn) { height: 17px; background: #dde2e4; border: 1px solid #c3ccd0; display: block; }
.page :deep(.range) { width: 91px; margin: 2px 0 0 57px; }
.inner { margin: 4px 6px 2px 4px; }
.btns { display: grid; grid-template-columns: 72px 72px 76px; gap: 4px; margin: 2px 0 0 7px; }
.chan { margin: 6px 0 0 7px; border-collapse: collapse; table-layout: fixed; width: 267px; background: #fff; }
.chan th { font-weight: 400; text-align: left; height: 16px; padding: 0 3px; background: #f3f6f8; }
.chan td { height: 16px; padding: 0; border: 1px solid #c4cdd1; }
.chan .c { text-align: center; } .chan .y { background: #ffffd9; }
.chan th:nth-child(1) { width: 39px; } .chan th:nth-child(2) { width: 42px; } .chan th:nth-child(3) { width: 57px; }
.page :deep(.chan td input) { width: 100%; height: 14px; display: block; padding-left: 3px; }
.dim { color: #888; } .dim .sel { background: #f1f1f1; opacity: .8; }
.filters { display: flex; align-items: center; height: 20px; margin: 8px 8px 0 8px; color: #000; }
.cut { width: 91px; height: 14px; margin: 5px 0 0 57px; background: #fff; }
.sb { width: 11px; background: #f1f3f4; display: flex; flex-direction: column; }
.sb i { flex: 0 0 275px; background: #c9ced1; }
.sb b { height: 12px; display: grid; place-items: center; }
.sb .dn { margin-top: auto; }
.sb b::after { content: ""; width: 3px; height: 3px; border: solid #777; border-width: 1px 0 0 1px; transform: rotate(45deg); }
.sb .dn::after { transform: rotate(225deg); }
.page :deep(.acc) { height: 18px; flex: none; display: flex; align-items: center; background: #6da2ab; border-bottom: 1px solid #9cc2c8; color: #fff; font-weight: 700; font-size: 9px; padding: 0 3px; width: 100%; }

.strip { width: 24px; flex: none; display: flex; flex-direction: column; align-items: center; gap: 3px; padding-top: 2px; color: #fff; font-weight: 700; font-size: 10px; border-left: 1px solid #3f6571; }
.strip .ico { width: 9px; height: 11px; }
.strip span { writing-mode: vertical-rl; line-height: 12px; }
.meas { flex: 1; min-width: 0; display: flex; flex-direction: column; }
.bench .meas .bar { padding-left: 3px; }
.tabs { height: 16px; background: #f0f0f0; display: flex; align-items: center; gap: 2px; font-weight: 700; color: #416b7a; }
.tabs a { padding: 0 4px; height: 14px; line-height: 14px; }
.tabs .on { background: #7ab8e8; }
.cols { display: flex; flex: 1; }
.sweepcfg { width: 226px; flex: none; background: #d9e4e7; padding-left: 1px; }
.page :deep(.start) { display: flex; align-items: center; justify-content: center; gap: 5px; width: 94px; height: 18px; margin: 3px 0 0 1px; background: #b9dcf1; border: 2px solid #35606f; border-radius: 2px; font-weight: 700; color: #28404c; outline: 1px dotted #567; outline-offset: -4px; }
.start .ico { width: 7px; height: 9px; }
.pair { display: flex; gap: 8px; height: 23px; align-items: center; padding-left: 3px; }
.pair label { display: flex; align-items: center; gap: 4px; }
.sweepcfg hr { border-top-color: #aebbc0; }
.r12 { margin: 0 3px 3px 1px; } .r44 { margin: 5px 43px 4px 1px; } .r52 { margin: 3px 53px 0 3px; }
.sweepcfg .row > label { width: 69px; margin-right: 4px; }
.sweepcfg .row > .reg { width: auto; display: flex; align-items: center; gap: 4px; margin-left: 75px; }
.tgt { margin-left: 6px; }
.page :deep(.wide) { width: 33px; border: 1px solid #b5bfc3; }
.page :deep(.edit) { width: 45px; height: 14px; background: #fff; border-radius: 2px; margin-left: 4px; }
.sect { height: 16px; line-height: 16px; color: #000; padding-left: 2px; }
.sect.res { height: 15px; line-height: 20px; }
.results { height: 100px; background: #efefef; border: 1px solid #bcc8cc; border-left: 0; margin-right: 2px; }
.rt { height: 19px; background: #d9e4e7; display: flex; align-items: center; gap: 6px; padding-left: 5px; }
.page :deep(.rt button), .page :deep(.gtools button) { display: flex; align-items: center; gap: 3px; }
.rt .caret { margin-left: 3px; }
.page :deep(.dis) { color: #98a4a8; }
.results table { width: 100%; border-collapse: collapse; table-layout: fixed; }
.results th { font-weight: 400; background: #fff; height: 14px; padding: 0; border-right: 1px solid #ddd; }
.results th:nth-child(2) { width: 84px; } .results .e { width: 7px; }
.results td { height: 17px; padding: 0 0 0 4px; border-bottom: 1px solid #c9cfd2; color: #2f437e; }
.results td + td { padding: 0 5px 0 3px; }
.results .sel { background: #dfdfdf; border: 1px solid #b9b9b9; height: 15px; color: #222; }
.sect.n { padding-left: 5px; height: 15px; } .sweepcfg .row.n > label { width: 71px; }

.graphcol { flex: 1; min-width: 0; background: #fff; display: flex; flex-direction: column; }
.gtools { height: 17px; background: #d9e3e5; display: flex; align-items: center; gap: 5px; padding: 0 3px 0 2px; flex: none; white-space: nowrap; }
.gtools > .caret { margin: 0 0 0 -3px; }
.gtools > .vsep { margin: 0 -2px; }
.unit { width: 34px; height: 17px; }
.unit.act { width: 46px; border: 1px solid #3b94cf; }
.blue { color: #1e3f7a; }
.gtools.low { height: 19px; gap: 4px; }
.seq .gtools.low { height: 17px; }
.gtools.low .gap { margin-right: 4px; }
.gtools button .caret { margin: 0 2px 0 3px; }
.gtools.sets { height: 18px; border-bottom: 1px solid #c6d0d3; gap: 5px; }
.gtools.sets .vsep { margin: 0; }
.chartwrap { position: relative; }
.chart, .scope svg { display: block; width: 100%; height: auto; }
svg text { font-family: "Open Sans", "Noto Sans", sans-serif; font-size: 8px; fill: #222; }
svg .mono { font-family: "Liberation Mono", monospace; font-size: 7px; fill: #000; }
svg .big { font-size: 15px; fill: #000; }
svg .value { font-size: 16px; fill: #000; }
.mid { text-anchor: middle; } .endt { text-anchor: end; }
.inchart { position: absolute; right: 107px; top: 28px; }
.seq .inchart { right: 130px; top: 27px; }
.legend { position: absolute; right: 2px; top: 23px; width: 79px; border: 1px solid #44525c; background: #fff; }
.lh { background: #2580b2; color: #fff; font-weight: 700; height: 14px; text-align: center; padding-right: 8px; position: relative; }
.lh svg { position: absolute; right: 1px; top: 3px; width: 8px; height: 6px; }
.legend label { display: flex; align-items: center; gap: 3px; height: 14px; padding-left: 2px; }
.legend i { width: 8px; height: 8px; } .navy { background: #0c2a7a; } .red { background: #c41a1a; }
.thumbs { display: flex; height: 53px; padding: 5px 0 0 3px; gap: 3px; }
.seq .thumbs { height: 52px; padding-top: 4px; }
.thumbs figure { width: 80px; text-align: center; white-space: nowrap; line-height: 11px; }
.thumbs figure svg { display: block; width: 58px; height: 36px; margin: 0 auto; border: 2px solid #a9bfc6; background: #fff; }
.thumbs .on svg { border-color: #7fa0ab; }
.thumbs .on figcaption { background: #98b1b9; color: #fff; height: 11px; }
.seq .thumbs .on svg { border-color: #4c6c82; }
.seq .thumbs .on figcaption { background: #4c6c82; }
.split { height: 5px; background: #4a7380; display: grid; place-items: center; }
.setsarea { flex: 1; min-height: 62px; background: #efefef; padding: 1px 23px 0 0; }
.setsarea table { border-collapse: collapse; width: 100%; table-layout: fixed; }
.setsarea th { font-weight: 400; height: 14px; line-height: 12px; padding: 0; border: 1px solid #bbb; border-left: 0; }
.setsarea td { height: 14px; line-height: 12px; padding: 0 2px; background: #fff; border-right: 1px solid #ddd; white-space: nowrap; }
.a { width: 15px; } .b { width: 57px; } .t { width: 89px; }

.nav { width: 180px; flex: none; display: flex; flex-direction: column; background: #f0f0f0; }
.nb { height: 19px; padding: 0 4px 0 0; }
.navtools { height: 33px; background: #e1e9ed; }
.navtools > div { display: flex; align-items: center; height: 17px; gap: 4px; padding-right: 3px; }
.navtools > .second { height: 16px; }
.navtools .caret { margin-left: -2px; }
.navtools label { width: 40px; }
.seqsel { width: 64px; height: 16px; }
.page :deep(.run) { width: 34px; height: 10px; background: #b9dcf1; border: 1px solid #35606f; border-radius: 2px; display: grid; place-items: center; margin-right: 3px; }
.run .ico { width: 5px; height: 6px; }
.navtools .vsep { margin: 0 1px; }
.treewrap { display: flex; height: 243px; }
.tree { flex: 1; min-width: 0; display: grid; grid-auto-rows: 1fr; background: #e3edf7; }
.tree li { display: flex; align-items: center; gap: 2px; white-space: nowrap; overflow: hidden; }
.tri { width: 0; height: 0; border: 2px solid transparent; border-left: 4px solid #111; border-right: 0; margin: 0 3px 0 2px; flex: none; }
.tri.open { border: 3px solid transparent; border-top: 4px solid #111; border-bottom: 0; margin: 0 2px 0 1px; }
.page :deep(.tree input[type="checkbox"]) { border: 1px solid #45637a; border-radius: 0; background: #f6fafe; width: 8px; height: 8px; }
.set { padding-left: 22px; } .steps { padding-left: 13px; } .leaf, .no { padding-left: 23px; } .addm { padding-left: 9px; }
.tree .no { gap: 3px; }
.leaf .dot { width: 6px; height: 6px; border-radius: 3px; background: #3d6075; margin: 0 3px 0 2px; }
.addp .ico, .post .ico { width: 8px; }
.white { background: #fff; }
.picked { background: #4c6c82; color: #fff; }
.picked .dot { background: #dfe9ef; }
.picked span { outline: 1px dotted #9db4c4; outline-offset: -1px; padding: 0 1px; }
.vs { width: 11px; position: relative; }
.vs i { position: absolute; left: 5px; top: 99px; height: 113px; width: 1px; background: #858585; }
.vs .hi { top: 58px; height: 129px; }
.hs { height: 11px; padding: 5px 23px 0 20px; }
.hs i { display: block; height: 1px; background: #858585; }
.nav .mm { height: 23px; position: relative; padding: 5px 4px 0 0; }
.mm .dots { position: absolute; left: 85px; top: 1px; }
.mtools { height: 17px; background: #dfe7ea; display: flex; align-items: center; gap: 4px; }
.mtools .act { outline: 2px solid #8cc3ef; }
.page :deep(.mtools .on) { display: flex; align-items: center; justify-content: space-between; width: 29px; height: 10px; margin-left: 5px; padding: 0 1px 0 3px; background: #6fe070; border: 1px solid #3a9a44; border-radius: 2px; font-weight: 700; font-size: 7px; color: #1c5a24; line-height: 8px; }
.page :deep(.mtools .on i) { width: 9px; height: 6px; background: #3fb34a; border: 1px solid #2c8035; }
.scope { height: 152px; background: #fff; padding-right: 2px; }
.gutter { width: 5px; flex: none; display: grid; place-items: center; }
.seq .mt { height: 17px; gap: 6px; padding-left: 3px; }
.stepcfg { width: 266px; flex: none; background: #b2c4cc; padding: 0 2px; position: relative; display: flex; flex-direction: column; }
.page :deep(.stepcfg .start) { margin: 4px 0 4px 2px; width: 95px; height: 19px; flex: none; }
.stepcfg .sect { height: 15px; line-height: 14px; }
.stepcfg .row > label { width: 84px; margin-right: 3px; }
.stepcfg .wf { margin-top: -2px; }
.group { margin: 7px 4px 0 2px; border: 1px solid #99aab2; height: 49px; }
.wf + .group { margin-top: 6px; }
.stepcfg .group .row > label { width: 81px; }
.group .row { height: 17px; }
.group .spin + .sel { margin-left: 2px; }
.trk { display: flex; align-items: center; gap: 4px; padding-left: 86px; height: 19px; }
.lv { display: grid; grid-template-columns: 92px 1fr; padding-left: 87px; height: 11px; line-height: 11px; }
.tip { position: absolute; left: 222px; top: 95px; width: 64px; padding: 0 4px; background: #f2f6f8e0; border: 1px solid #b6c1c6; color: #8a9499; z-index: 2; box-shadow: 1px 1px 1px #8899; }
.fr { margin-top: 1px; }
.chl { height: 20px; line-height: 22px; padding-left: 2px; }
.badges { display: flex; height: 11px; margin: 3px 0 4px 1px; }
.page :deep(.badges button) { width: 10px; background: #5d8a96; border: 1px solid #4a7480; border-radius: 2px; color: #fff; font-weight: 700; line-height: 9px; }
.page :deep(.txt) { width: 54px; height: 15px; background: #fff; padding: 0 2px; margin-left: 3px; border-bottom: 1px solid #8a979d; }
.last { margin-top: 4px; }
.page :deep(.adv) { align-self: flex-start; width: 84px; height: 15px; margin: 3px 0 0 1px; background: #fff; border-radius: 2px; }

.status { height: 13px; display: flex; align-items: center; justify-content: flex-end; gap: 3px; background: #f0f0f0; white-space: nowrap; padding-right: 1px; }
.status b { background: #000; color: #25d425; font-weight: 400; padding: 0 4px; height: 13px; line-height: 12px; }
.status span { padding: 0 3px 0 2px; }
.status svg { width: 8px; height: 8px; }
</style>
